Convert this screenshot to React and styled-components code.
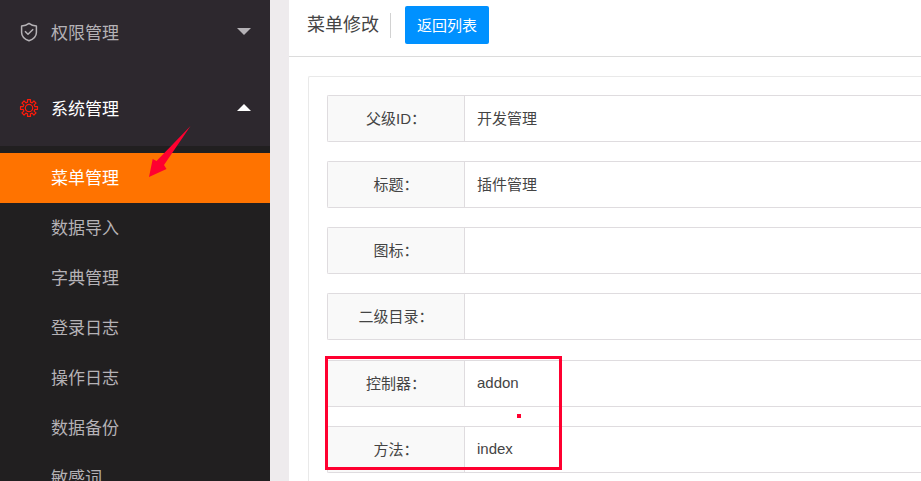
import React, { useState } from 'react';
import styled, { createGlobalStyle } from 'styled-components';

const GlobalStyle = createGlobalStyle`
  * {
    box-sizing: border-box;
  }

  body {
    margin: 0;
    overflow: hidden;
    font-family: 'Liberation Sans', 'Noto Sans CJK SC', sans-serif;
    font-size: 15px;
    color: #444;
  }

  button,
  input {
    font: inherit;
  }
`;

const Page = styled.div`
  display: flex;
  height: 100vh;
  overflow: hidden;
  background: #eeebed;
`;

const Sidebar = styled.nav`
  flex: 0 0 270px;
  overflow: hidden;
  background: #2d282e;
  font-size: 17px;
`;

const Groups = styled.div`
  margin-top: -6px;
`;

const GroupButton = styled.button`
  display: flex;
  align-items: center;
  gap: 12px;
  width: 100%;
  height: 76px;
  padding: 0 19px;
  border: none;
  background: none;
  color: ${({ $open }) => ($open ? '#fff' : '#b5b2b6')};
  text-align: left;
  cursor: pointer;
`;

const GroupLabel = styled.span`
  flex: 1;
  padding-bottom: 2px;
`;

const Caret = styled.span`
  margin-bottom: 2px;
  border: 7px solid transparent;
  border-top: ${({ $open }) => ($open ? 'none' : '7px solid #b5b2b6')};
  border-bottom: ${({ $open }) => ($open ? '7px solid #fff' : 'none')};
`;

const SubMenu = styled.ul`
  margin: 0;
  padding: 7px 0;
  list-style: none;
  background: #211f20;
`;

const SubItem = styled.li`
  position: relative;
`;

const SubLink = styled.a`
  display: block;
  padding: 2px 0 0 51px;
  line-height: 48px;
  color: ${({ $active }) => ($active ? '#fff' : '#b5b2b6')};
  background: ${({ $active }) => ($active ? '#ff7300' : 'transparent')};
  text-decoration: none;
`;

const Arrow = styled.svg`
  position: absolute;
  left: 148px;
  bottom: 24px;
  pointer-events: none;
`;

const Main = styled.main`
  flex: 1;
  min-width: 0;
  margin-left: 19px;
  background: #fff;
`;

const Header = styled.header`
  display: flex;
  align-items: center;
  height: 57px;
  padding: 0 18px 6px;
  border-bottom: 1px solid #dcdcdc;
`;

const Title = styled.h1`
  margin: 0;
  padding-right: 11px;
  border-right: 1px solid #d2d2d2;
  font-size: 18px;
  font-weight: 400;
  line-height: 25px;
`;

const BackButton = styled.button`
  height: 38px;
  margin-left: 14px;
  padding: 0 12px 2px;
  border: none;
  border-radius: 2px;
  background: #0091ff;
  color: #fff;
  cursor: pointer;
`;

const Card = styled.form`
  display: flex;
  flex-direction: column;
  gap: 19px;
  margin: 19px 0 0 19px;
  padding: 18px 0 19px 18px;
  border: 1px solid #e9e9e9;
  border-right: none;
  border-radius: 2px 0 0 2px;
`;

const Marked = styled.div`
  position: relative;
  display: flex;
  flex-direction: column;
  gap: 19px;
  margin-top: 1px;
`;

const Field = styled.div`
  display: flex;
  height: 47px;
  border: 1px solid #dfdcdf;
  border-right: none;
  border-radius: 2px 0 0 2px;
`;

const FieldLabel = styled.label`
  display: flex;
  align-items: center;
  justify-content: center;
  flex: 0 0 137px;
  padding-bottom: 2px;
  border-right: 1px solid #dfdcdf;
  background: #f9f9f9;
`;

const FieldInput = styled.input`
  flex: 1;
  min-width: 0;
  padding: 0 12px 2px;
  border: none;
  outline: none;
  background: none;
  color: #444;
`;

const Highlight = styled.div`
  position: absolute;
  top: -4px;
  left: -2px;
  width: 237px;
  height: 114px;
  border: 3px solid #ff0030;
  pointer-events: none;
`;

const Dot = styled.div`
  position: absolute;
  top: 54px;
  left: 190px;
  width: 4px;
  height: 4px;
  background: #ff0030;
`;

const ShieldIcon = () => (
  <svg width="20" height="20" viewBox="0 0 20 20" fill="none" stroke="currentColor" strokeWidth="1.5" strokeLinejoin="round">
    <path d="M10 1.4C8 2.9 5.3 3.8 2.6 4V10.4C2.6 14.2 6 17.2 10 18.8C14 17.2 17.4 14.2 17.4 10.4V4C14.7 3.8 12 2.9 10 1.4Z" />
    <path d="M6 9.3L9 12.3L14.2 7.2" />
  </svg>
);

// eight teeth, each drawn as base - tip - tip - base
const gearPoints = Array.from({ length: 8 }, (_, i) =>
  [[-14, 6], [-10, 8.6], [10, 8.6], [14, 6]].map(([offset, r]) => {
    const a = ((i * 45 + offset) * Math.PI) / 180;
    return `${10 + r * Math.cos(a)},${10 + r * Math.sin(a)}`;
  }).join(' ')
).join(' ');

const GearIcon = () => (
  <svg width="20" height="20" viewBox="0 0 20 20" fill="none" stroke="#ff1a0a" strokeWidth="1.2" strokeLinejoin="round">
    <polygon points={gearPoints} />
    <circle cx="10" cy="10" r="3.7" />
  </svg>
);

const groups = [
  { name: '权限管理', icon: ShieldIcon, items: [] },
  {
    name: '系统管理',
    icon: GearIcon,
    items: ['菜单管理', '数据导入', '字典管理', '登录日志', '操作日志', '数据备份', '敏感词'],
  },
];

const fields = [
  { id: 'parent', label: '父级ID：', value: '开发管理' },
  { id: 'title', label: '标题：', value: '插件管理' },
  { id: 'icon', label: '图标：', value: '' },
  { id: 'second', label: '二级目录：', value: '' },
];

const routeFields = [
  { id: 'controller', label: '控制器：', value: 'addon' },
  { id: 'method', label: '方法：', value: 'index' },
];

const FormRow = ({ id, label, value }) => (
  <Field>
    <FieldLabel htmlFor={id}>{label}</FieldLabel>
    <FieldInput id={id} type="text" defaultValue={value} />
  </Field>
);

const App = () => {
  const [openGroup, setOpenGroup] = useState('系统管理');
  const [active, setActive] = useState('菜单管理');

  return (
    <Page>
      <GlobalStyle />
      <Sidebar>
        <Groups>
          {groups.map(({ name, icon: Icon, items }) => {
            const open = openGroup === name;
            return (
              <div key={name}>
                <GroupButton type="button" $open={open} aria-expanded={open} onClick={() => setOpenGroup(open ? '' : name)}>
                  <Icon />
                  <GroupLabel>{name}</GroupLabel>
                  <Caret $open={open} />
                </GroupButton>
                {open && items.length > 0 && (
                  <SubMenu>
                    {items.map((item) => (
                      <SubItem key={item}>
                        <SubLink href="#" $active={active === item} onClick={() => setActive(item)}>
                          {item}
                        </SubLink>
                        {active === item && (
                          <Arrow width="44" height="54" viewBox="0 0 44 54">
                            <path d="M42.5 1L16 40L18.5 44L1 52L4.7 34L8.5 36Z" fill="#ff0030" />
                          </Arrow>
                        )}
                      </SubItem>
                    ))}
                  </SubMenu>
                )}
              </div>
            );
          })}
        </Groups>
      </Sidebar>

      <Main>
        <Header>
          <Title>菜单修改</Title>
          <BackButton type="button">返回列表</BackButton>
        </Header>
        <Card>
          {fields.map((field) => (
            <FormRow key={field.id} {...field} />
          ))}
          <Marked>
            {routeFields.map((field) => (
              <FormRow key={field.id} {...field} />
            ))}
            <Highlight />
            <Dot />
          </Marked>
        </Card>
      </Main>
    </Page>
  );
};

export default App;
